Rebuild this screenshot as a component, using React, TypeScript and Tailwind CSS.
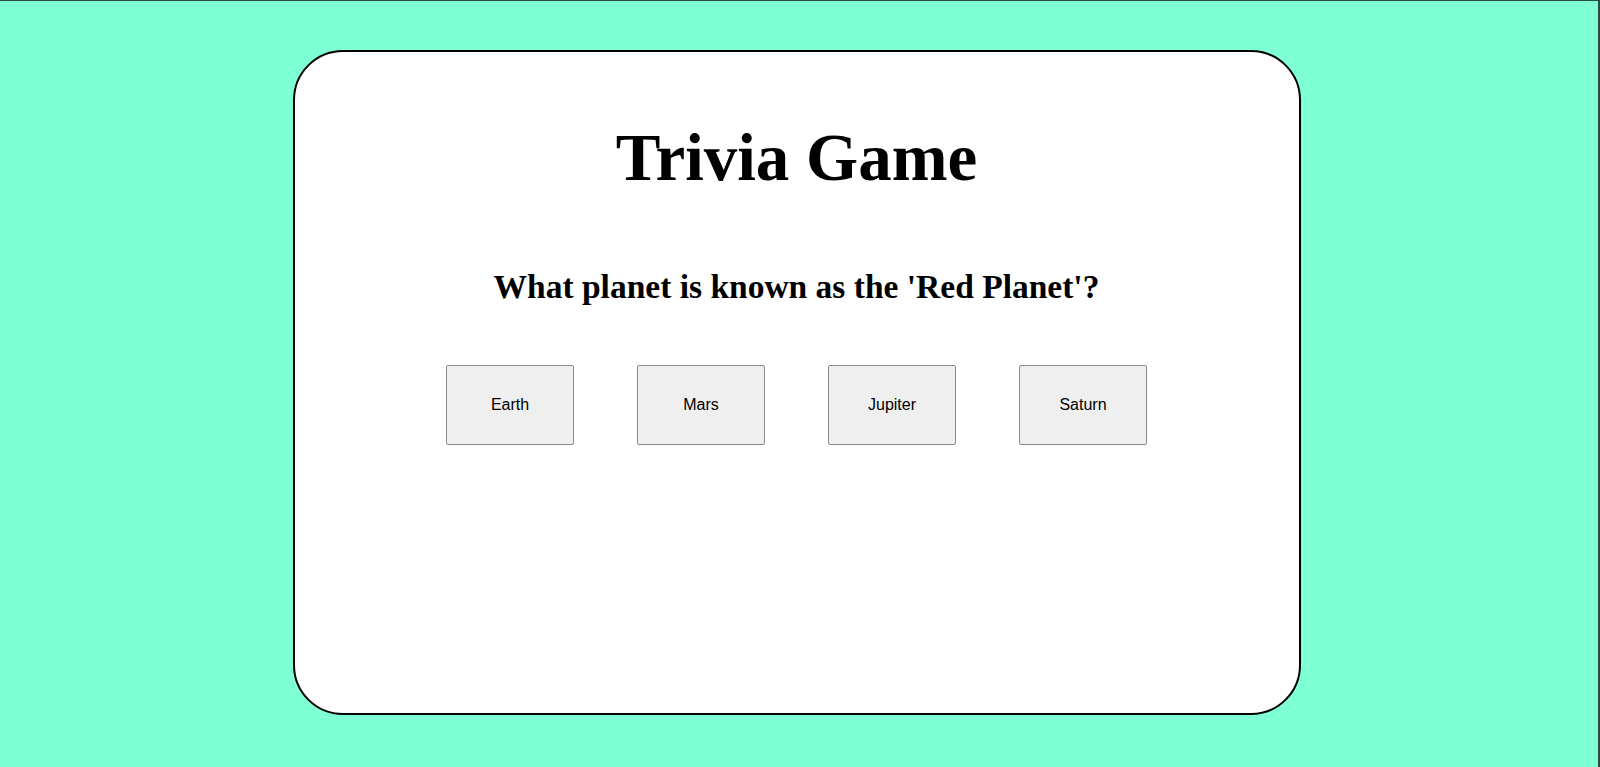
import React from 'react';

const ANSWERS = ['Earth', 'Mars', 'Jupiter', 'Saturn'];

export default function App() {
  return (
    <div className="h-[767px] bg-[#7fffd4] border-t border-r-2 border-[#2b4a43] flex justify-center pr-[5px] pt-[49px]">
      <div className="w-[1008px] h-[665px] bg-white border-2 border-black rounded-[50px] flex flex-col items-center">
        <h1
          className="mt-[72px] text-[67px] leading-none font-bold text-black"
          style={{ fontFamily: '"Liberation Serif", "Times New Roman", serif' }}
        >
          Trivia Game
        </h1>
        <h2
          className="mt-[79px] text-[33.5px] leading-none font-bold text-black"
          style={{ fontFamily: '"Liberation Serif", "Times New Roman", serif' }}
        >
          What planet is known as the 'Red Planet'?
        </h2>
        <div className="mt-[61px] flex gap-[63px]">
          {ANSWERS.map(answer => (
            <button
              key={answer}
              className="w-32 h-20 bg-[#efefef] border border-[#8a8a8a] rounded-[2px] text-[16px] text-black"
              style={{ fontFamily: '"Liberation Sans", Arial, sans-serif' }}
            >
              {answer}
            </button>
          ))}
        </div>
      </div>
    </div>
  );
}
